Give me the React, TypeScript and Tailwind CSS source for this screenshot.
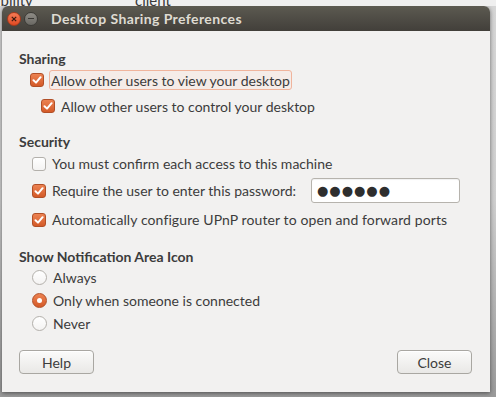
import React from 'react';

const font = { fontFamily: 'Lato, "Open Sans", sans-serif' };

const Check = ({ checked }: { checked: boolean }) =>
  checked ? (
    <span className="w-[14px] h-[14px] shrink-0 rounded-[3px] border border-[#b14f27] bg-gradient-to-b from-[#ec8251] to-[#d45a27] flex items-center justify-center">
      <svg width="10" height="10" viewBox="0 0 10 10">
        <path d="M1.5 5.2 L4 7.6 L8.6 2.2" fill="none" stroke="#fff" strokeWidth="2" strokeLinecap="round" strokeLinejoin="round" />
      </svg>
    </span>
  ) : (
    <span className="w-[14px] h-[14px] shrink-0 rounded-[3px] border border-[#b3b0ab] bg-gradient-to-b from-white to-[#f4f3f2]" />
  );

const Radio = ({ checked }: { checked: boolean }) =>
  checked ? (
    <span className="w-[15px] h-[15px] shrink-0 rounded-full border border-[#b14f27] bg-gradient-to-b from-[#ec8251] to-[#d45a27] flex items-center justify-center">
      <span className="w-[5px] h-[5px] rounded-full bg-white" />
    </span>
  ) : (
    <span className="w-[15px] h-[15px] shrink-0 rounded-full border border-[#b3b0ab] bg-gradient-to-b from-white to-[#f4f3f2]" />
  );

const Button = ({ label }: { label: string }) => (
  <button className="w-[75px] h-[24px] rounded-[4px] border border-[#a9a7a2] bg-gradient-to-b from-[#fbfbfa] to-[#e9e8e6] text-[14px] text-[#3c3c3c] shadow-[inset_0_1px_0_#fff]">
    {label}
  </button>
);

export default function App() {
  return (
    <div className="w-[496px] h-[397px] overflow-hidden bg-gradient-to-b from-[#d6d6d6] via-[#cfcfcf] to-[#9a9a9a] relative" style={font}>
      {/* background window peeking out above */}
      <div className="h-[6px] bg-[#efefef] overflow-hidden relative">
        <span className="absolute left-[-3px] top-[-11px] text-[15px] text-[#3a3a3a]">ibility</span>
        <span className="absolute left-[135px] top-[-11px] text-[15px] text-[#3a3a3a]">client</span>
      </div>

      <div className="ml-[2px] w-[488px] h-[386px] rounded-t-[6px] overflow-hidden flex flex-col bg-[#f2f1f0] shadow-[0_1px_4px_rgba(0,0,0,0.5)]">
        {/* title bar */}
        <div className="h-[25px] shrink-0 bg-gradient-to-b from-[#5c5a51] to-[#423f3a] flex items-center">
          <span className="ml-[5px] w-[14px] h-[14px] rounded-full bg-gradient-to-b from-[#f47a55] to-[#df4a22] border border-[#a83a1c] flex items-center justify-center">
            <svg width="6" height="6" viewBox="0 0 6 6">
              <path d="M0.8 0.8 L5.2 5.2 M5.2 0.8 L0.8 5.2" stroke="#3a1a10" strokeWidth="1.2" />
            </svg>
          </span>
          <span className="ml-[3px] w-[14px] h-[14px] rounded-full bg-gradient-to-b from-[#8e8c86] to-[#6a6863] border border-[#3c3b37] flex items-center justify-center">
            <span className="w-[6px] h-[1.5px] bg-[#3a3935]" />
          </span>
          <span className="ml-[13px] text-[14px] font-bold text-[#dfdbd2] tracking-[0.4px]">Desktop Sharing Preferences</span>
        </div>

        <div className="flex flex-col pl-[17px] text-[14px] text-[#3c3c3c]">
          <div className="mt-[17px] h-[20px] flex items-center font-bold">Sharing</div>
          <div className="h-[24px] flex items-center pl-[11px]">
            <Check checked />
            <span className="ml-[5px] h-[20px] px-[1px] flex items-center rounded-[3px] border border-[#f0b49c] bg-[#f5ece8]">
              Allow other users to view your desktop
            </span>
          </div>
          <div className="h-[28px] flex items-center pl-[22px]">
            <Check checked />
            <span className="ml-[6px]">Allow other users to control your desktop</span>
          </div>

          <div className="mt-[11px] h-[20px] flex items-center font-bold">Security</div>
          <div className="h-[25px] flex items-center pl-[13px]">
            <Check checked={false} />
            <span className="ml-[6px]">You must confirm each access to this machine</span>
          </div>
          <div className="h-[29px] flex items-center pl-[13px]">
            <Check checked />
            <span className="ml-[6px] w-[259px] shrink-0">Require the user to enter this password:</span>
            <div className="w-[149px] h-[25px] rounded-[3px] border border-[#b6b3ad] bg-white flex items-center pl-[5px] shadow-[inset_0_1px_1px_rgba(0,0,0,0.06)]">
              <span className="text-[13px] tracking-[1px] text-[#2e2e2e]" style={{ fontFamily: '"DejaVu Sans", sans-serif' }}>●●●●●●</span>
            </div>
          </div>
          <div className="h-[29px] flex items-center pl-[13px]">
            <Check checked />
            <span className="ml-[6px] tracking-[0.1px]">Automatically configure UPnP router to open and forward ports</span>
          </div>

          <div className="mt-[12px] h-[20px] flex items-center font-bold">Show Notification Area Icon</div>
          <div className="h-[23px] flex items-center pl-[13px]">
            <Radio checked={false} />
            <span className="ml-[6px]">Always</span>
          </div>
          <div className="h-[23px] flex items-center pl-[13px]">
            <Radio checked />
            <span className="ml-[6px]">Only when someone is connected</span>
          </div>
          <div className="h-[23px] flex items-center pl-[13px]">
            <Radio checked={false} />
            <span className="ml-[6px]">Never</span>
          </div>

          <div className="mt-[15px] flex justify-between pr-[18px]">
            <Button label="Help" />
            <Button label="Close" />
          </div>
        </div>
      </div>
    </div>
  );
}
